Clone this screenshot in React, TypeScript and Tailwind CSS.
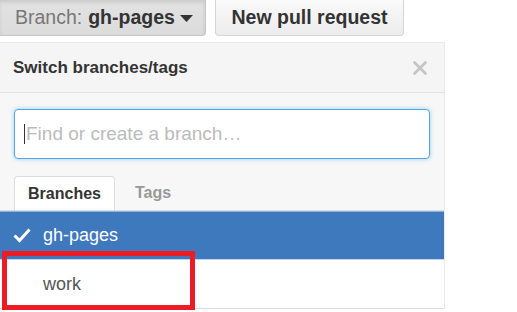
import { X } from 'lucide-react'

function Caret() {
  return (
    <svg width="13" height="7" viewBox="0 0 13 7" className="ml-[5px] mt-[2px]">
      <path d="M0 0 L13 0 L6.5 7 Z" fill="#333" />
    </svg>
  )
}

function CheckMark() {
  return (
    <svg width="18" height="15" viewBox="0 0 18 15" className="shrink-0">
      <path d="M1.5 7.5 L6.5 12.5 L16.5 1.5" fill="none" stroke="#fff" strokeWidth="3" strokeLinejoin="miter" />
    </svg>
  )
}

export default function App() {
  return (
    <div className="relative w-[517px] h-[312px] overflow-hidden bg-white font-['Liberation_Sans',Arial,sans-serif] text-[#333]">
      {/* top buttons */}
      <div className="flex gap-[9px] h-[36px]">
        <button className="ml-[-2px] w-[208px] h-[36px] flex items-center pl-[16px] bg-gradient-to-b from-[#e2e2e2] to-[#dcdcdc] border border-[#c8c8c8] border-t-0 rounded-br-[4px] text-[19.5px] leading-none shadow-[inset_0_2px_4px_rgba(0,0,0,0.12)]">
          <span className="text-[#777]">Branch:</span>
          <span className="ml-[6px] font-bold text-[#333]">gh-pages</span>
          <Caret />
        </button>
        <button className="w-[189px] h-[36px] flex items-center justify-center bg-gradient-to-b from-[#fafafa] to-[#ececec] border border-[#d5d5d5] border-t-0 rounded-b-[4px] text-[19.5px] font-bold leading-none text-[#333]">
          New pull request
        </button>
      </div>

      {/* branch select panel */}
      <div className="mt-[6px] w-[445px] border-t border-r border-[#eaeaea] bg-[#f7f7f7]">
        <div className="h-[50px] flex items-center justify-between pl-[13px] pr-[13px] bg-[#f5f5f5] border-b border-[#e2e2e2]">
          <span className="text-[17px] font-bold text-[#333]">Switch branches/tags</span>
          <X className="h-[22px] w-[22px] text-[#c4c4c4]" strokeWidth={3} />
        </div>

        <div className="px-[14px] pt-[16px]">
          <div className="h-[50px] w-[416px] flex items-center pl-[9px] bg-white border-[1.5px] border-[#51a7e8] rounded-[4px] shadow-[0_0_4px_rgba(81,167,232,0.55)]">
            <span className="w-[1px] h-[20px] bg-[#333]" />
            <span className="ml-[1px] text-[19px] text-[#bbb]">Find or create a branch…</span>
          </div>

          <div className="mt-[17px] flex items-end h-[34px]">
            <div className="h-[34px] w-[101px] flex items-center justify-center bg-white border border-b-0 border-[#ddd] rounded-t-[4px] text-[16px] font-bold text-[#333]">
              Branches
            </div>
            <div className="h-[34px] flex items-center pl-[20px] text-[16px] font-bold text-[#999]">Tags</div>
          </div>
        </div>

        <div className="border-t border-[#ddd] bg-white">
          <div className="h-[48px] flex items-center gap-[12px] pl-[13px] bg-[#3e78bd] border-t border-[#8fb0da] text-[18px] text-white">
            <CheckMark />
            <span>gh-pages</span>
          </div>
          <div className="h-[50px] flex items-center pl-[43px] bg-white border-t border-[#c3d4ea] border-b border-b-[#ddd] text-[18px] text-[#555]">
            work
          </div>
        </div>
      </div>

      {/* annotation box */}
      <div className="absolute left-[2px] top-[251px] w-[193px] h-[59px] border-[5px] border-[#ed1c24]" />
    </div>
  )
}
